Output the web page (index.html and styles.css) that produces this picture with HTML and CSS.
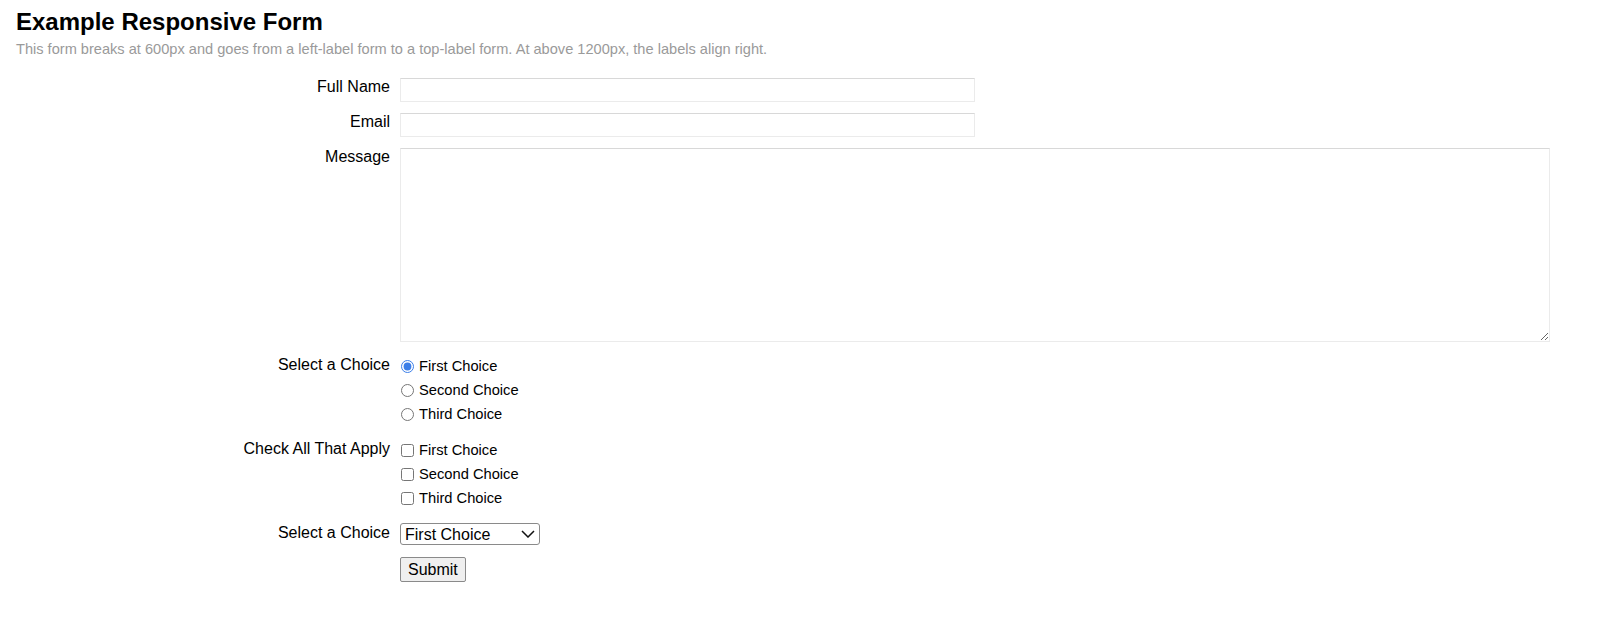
FILE: index.html
```html
<!DOCTYPE html>
<html lang="en">
<head>
<meta charset="utf-8">
<title>Example Responsive Form</title>
<link rel="stylesheet" href="styles.css">
</head>
<body>
<h1 class="title">Example Responsive Form</h1>
<p class="subtitle">This form breaks at 600px and goes from a left-label form to a top-label form. At above 1200px, the labels align right.</p>
<form class="form">
  <label class="label" for="name">Full Name</label>
  <div class="field"><input class="text-input" id="name" type="text"></div>

  <label class="label" for="email">Email</label>
  <div class="field"><input class="text-input" id="email" type="email"></div>

  <label class="label" for="msg">Message</label>
  <div class="field"><textarea class="textarea" id="msg"></textarea></div>

  <div class="label label-tall">Select a Choice</div>
  <div class="field options">
    <label class="option"><input class="radio" type="radio" name="choice" checked> First Choice</label>
    <label class="option"><input class="radio" type="radio" name="choice"> Second Choice</label>
    <label class="option"><input class="radio" type="radio" name="choice"> Third Choice</label>
  </div>

  <div class="label label-tall">Check All That Apply</div>
  <div class="field options">
    <label class="option"><input class="check" type="checkbox"> First Choice</label>
    <label class="option"><input class="check" type="checkbox"> Second Choice</label>
    <label class="option"><input class="check" type="checkbox"> Third Choice</label>
  </div>

  <label class="label label-tall" for="sel">Select a Choice</label>
  <div class="field">
    <span class="select-wrap">
      <select class="select" id="sel">
        <option>First Choice</option>
        <option>Second Choice</option>
        <option>Third Choice</option>
      </select>
      <svg class="chevron" width="14" height="8" viewBox="0 0 14 8"><path d="M1 1 L7 7 L13 1" fill="none" stroke="#111" stroke-width="1.5"/></svg>
    </span>
  </div>

  <div class="label"></div>
  <div class="field"><button class="submit" type="button">Submit</button></div>
</form>
</body>
</html>
```

FILE: styles.css
```css
html, body {
  background: #fff;
}
body {
  margin: 0;
  padding: 8px 16px;
  font-family: "Liberation Sans", Arial, Helvetica, sans-serif;
  color: #000;
}
.title {
  margin: 0;
  font-size: 24px;
  line-height: 28px;
  font-weight: bold;
}
.subtitle {
  margin: 4px 0 0;
  font-size: 14.6px;
  line-height: 18px;
  color: #9a9a9a;
}
.form {
  margin-top: 20px;
  display: grid;
  grid-template-columns: 374px 1150px;
  column-gap: 10px;
  row-gap: 11px;
}
.label {
  text-align: right;
  font-size: 16px;
  line-height: 18px;
}
.label-tall {
  line-height: 24px;
}
.field {
  display: flex;
  flex-direction: column;
  align-items: flex-start;
}
.text-input {
  box-sizing: border-box;
  width: 575px;
  height: 24px;
  margin: 0;
  border: 1px solid #ebebeb;
  border-top-color: #d8d8d8;
  background: #fff;
  font-size: 14px;
  outline: none;
}
.textarea {
  box-sizing: border-box;
  width: 1150px;
  height: 194px;
  margin: 0;
  border: 1px solid #ebebeb;
  border-top-color: #d8d8d8;
  background: #fff;
  display: block;
  outline: none;
}
.options {
  padding-top: 1px;
}
.option {
  display: flex;
  align-items: center;
  height: 24px;
  font-size: 14.7px;
}
.radio, .check {
  margin: 0 5px 0 1px;
  width: 13px;
  height: 13px;
  accent-color: #3b7ee8;
}
.select-wrap {
  position: relative;
  display: inline-block;
  margin-top: 2px;
}
.select {
  -webkit-appearance: none;
  appearance: none;
  box-sizing: border-box;
  width: 140px;
  height: 22px;
  margin: 0;
  padding: 0 0 0 4px;
  border: 1px solid #8a8a8a;
  border-radius: 3px;
  background: #fff;
  font-family: "Liberation Sans", Arial, sans-serif;
  font-size: 16px;
  color: #000;
}
.chevron {
  position: absolute;
  right: 5px;
  top: 7px;
  pointer-events: none;
}
.submit {
  box-sizing: border-box;
  height: 25px;
  padding: 0 7px;
  margin: 1px 0 0;
  border: 1px solid #8a8a8a;
  border-radius: 2px;
  background: #efefef;
  font-family: "Liberation Sans", Arial, sans-serif;
  font-size: 16px;
  color: #000;
}
```
